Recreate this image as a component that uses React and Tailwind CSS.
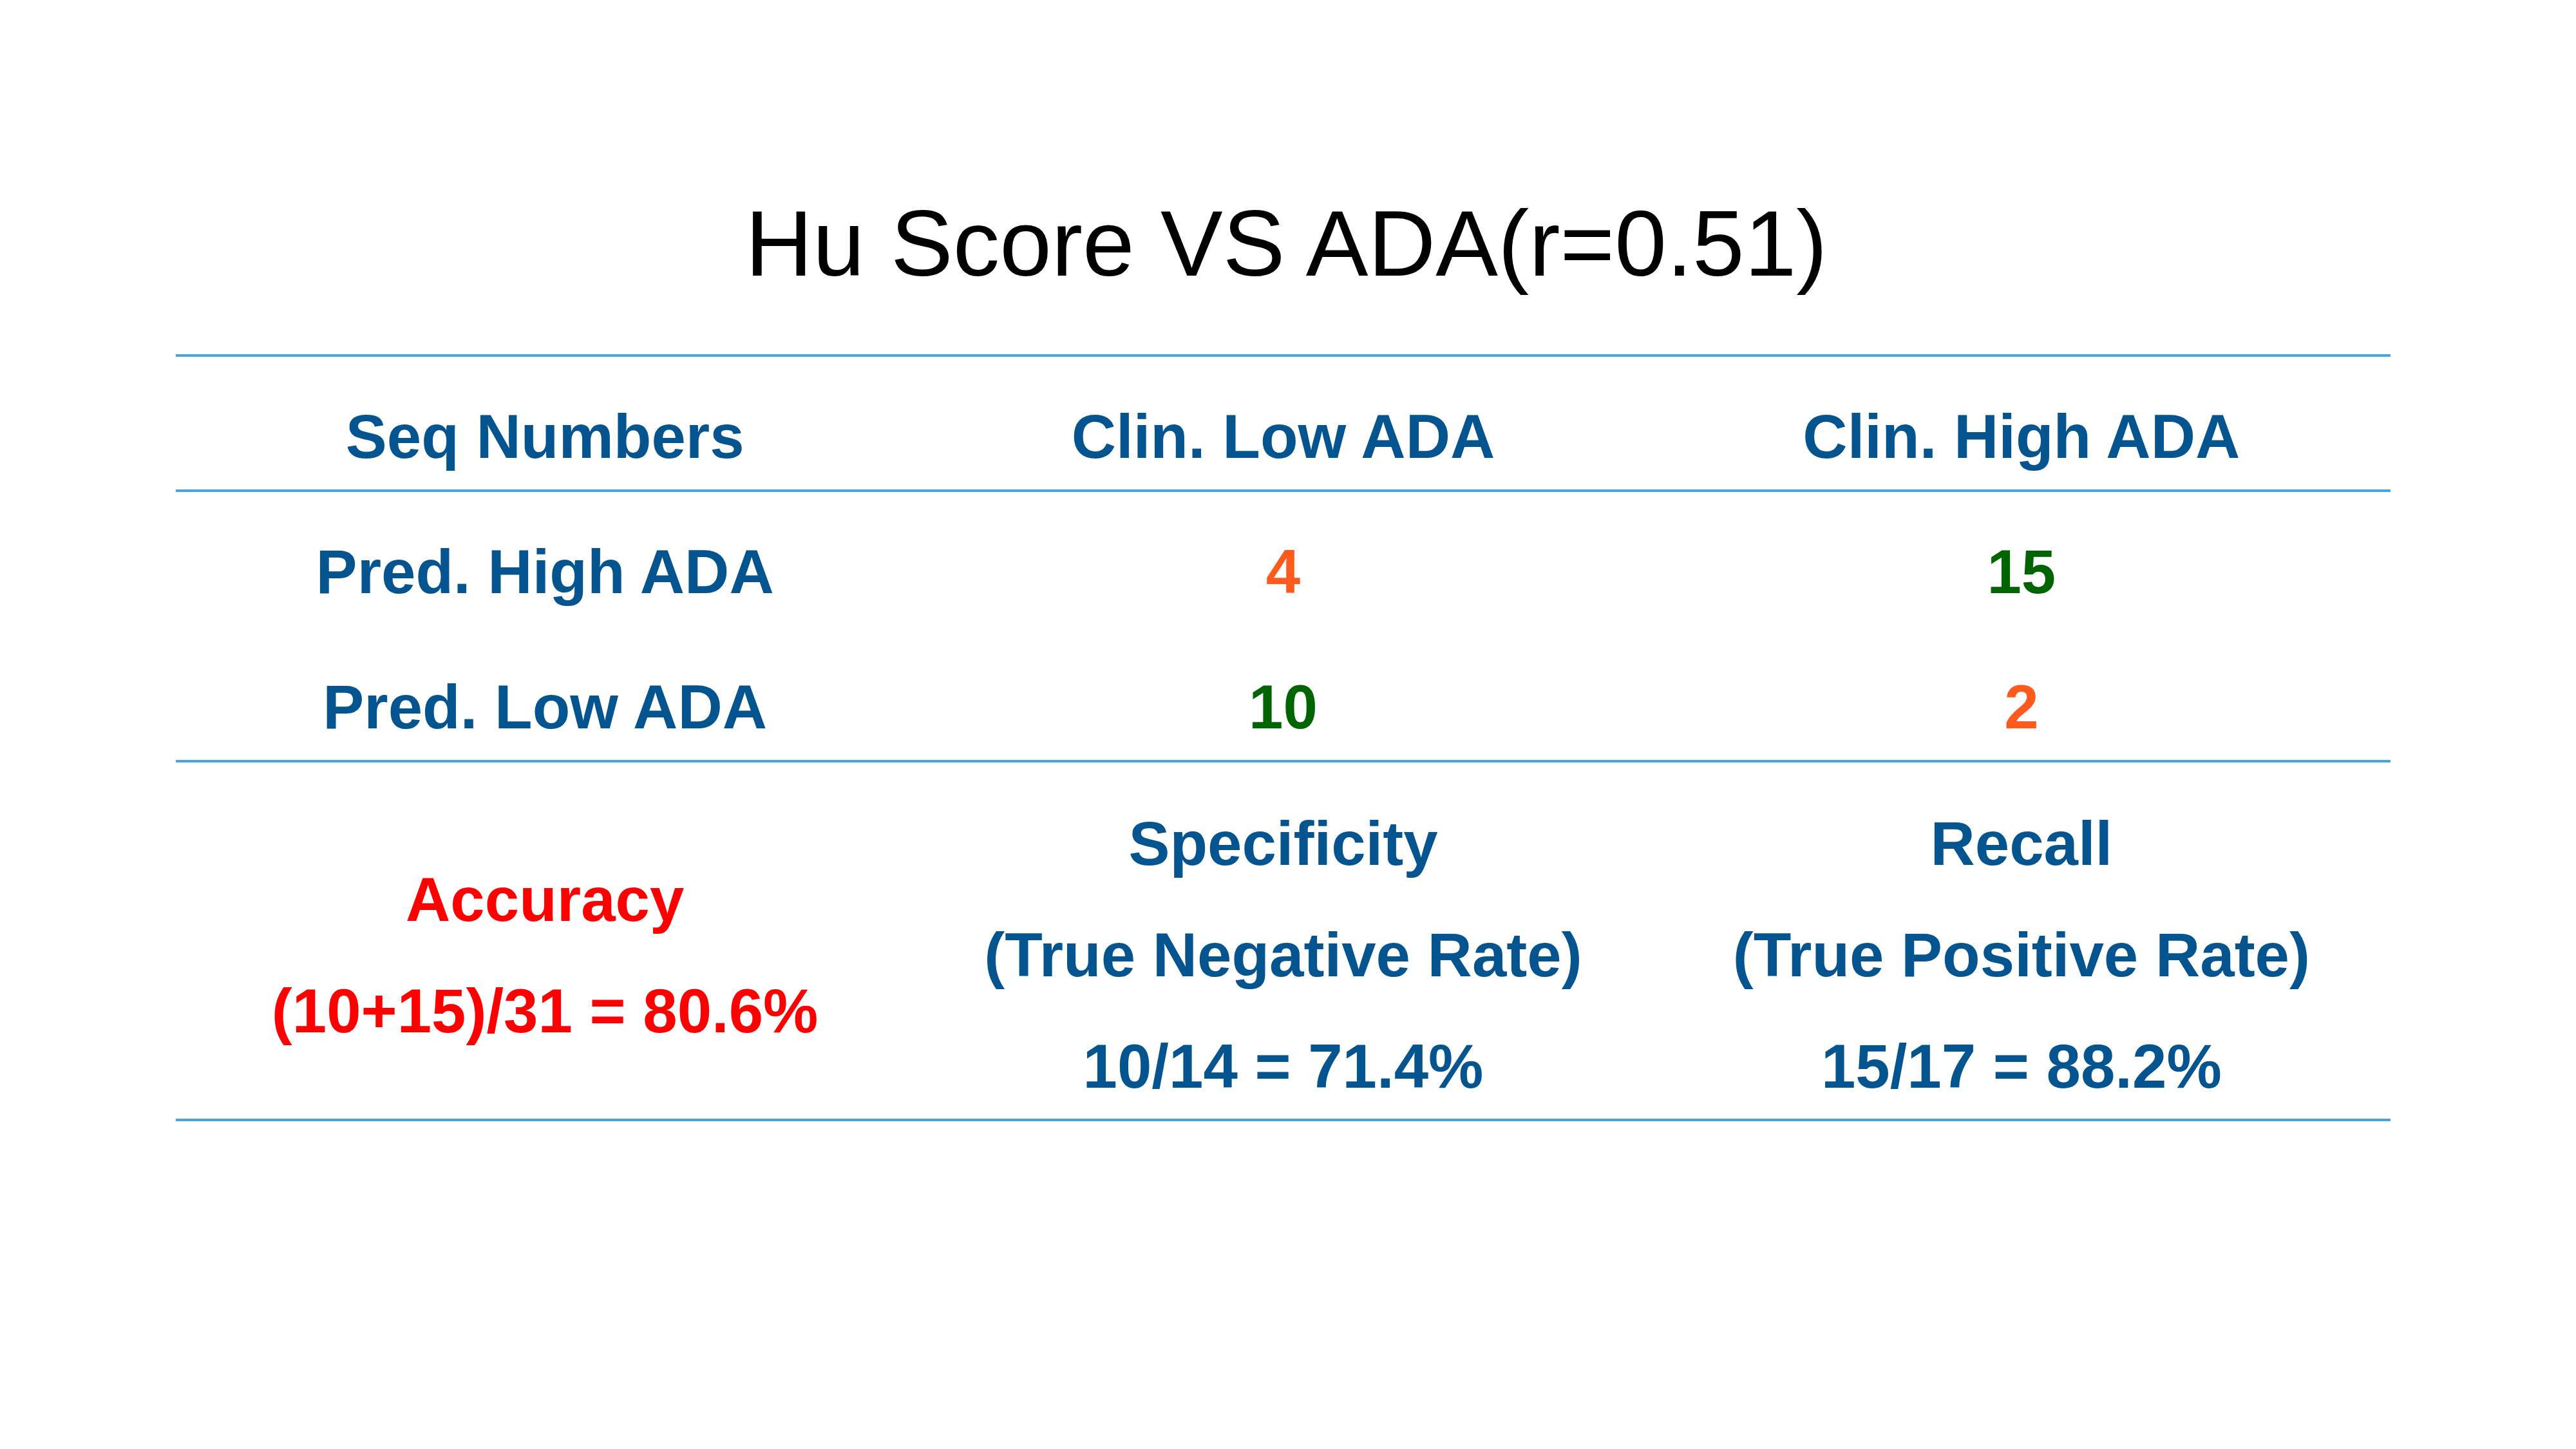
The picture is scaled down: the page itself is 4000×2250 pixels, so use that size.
const lineColor = 'border-[#4aa3db]'

const Row = ({ cells, className }) => (
    <div className={`grid grid-cols-3 text-center ${className}`}>
        {cells.map((c, i) => (
            <div key={i} className={c.color}>
                {c.text}
            </div>
        ))}
    </div>
)

export default function App() {
    const blue = 'text-[#04548f]'
    const orange = 'text-[#fe5a1d]'
    const green = 'text-[#006400]'

    return (
        <div className="w-[4000px] h-[2250px] bg-white font-['Liberation_Sans',Arial,sans-serif]">
            <div className="ml-[273px] w-[3439px] pt-[306px]">
                <h1 className="pl-[10px] text-center text-[145px] leading-[144px] text-black">
                    Hu Score VS ADA(r=0.51)
                </h1>

                <div className="mt-[100px] font-bold text-[96px] leading-[110px]">
                    {/* header */}
                    <Row
                        className={`h-[210px] border-t-[4px] ${lineColor} pt-[69px]`}
                        cells={[
                            { text: 'Seq Numbers', color: blue },
                            { text: 'Clin. Low ADA', color: blue },
                            { text: 'Clin. High ADA', color: blue },
                        ]}
                    />
                    <Row
                        className={`h-[213px] border-t-[4px] ${lineColor} pt-[69px]`}
                        cells={[
                            { text: 'Pred. High ADA', color: blue },
                            { text: '4', color: orange },
                            { text: '15', color: green },
                        ]}
                    />
                    <Row
                        className="h-[207px] pt-[70px]"
                        cells={[
                            { text: 'Pred. Low ADA', color: blue },
                            { text: '10', color: green },
                            { text: '2', color: orange },
                        ]}
                    />

                    {/* metrics */}
                    <div
                        className={`grid grid-cols-3 items-center text-center h-[561px] border-y-[4px] ${lineColor} pt-[39px] leading-[173px]`}
                    >
                        <div className="text-[#ff0000]">
                            <div>Accuracy</div>
                            <div>(10+15)/31 = 80.6%</div>
                        </div>
                        <div className={blue}>
                            <div>Specificity</div>
                            <div>(True Negative Rate)</div>
                            <div>10/14 = 71.4%</div>
                        </div>
                        <div className={blue}>
                            <div>Recall</div>
                            <div>(True Positive Rate)</div>
                            <div>15/17 = 88.2%</div>
                        </div>
                    </div>
                </div>
            </div>
        </div>
    )
}
